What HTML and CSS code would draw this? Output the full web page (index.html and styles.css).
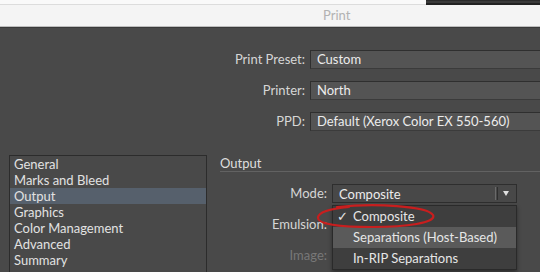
FILE: index.html
```html
<!DOCTYPE html>
<html>
<head>
<meta charset="utf-8">
<link rel="stylesheet" href="styles.css">
</head>
<body>
<div class="screen">
  <div class="topstrip">
    <div class="bgwin-left"></div>
    <div class="bgwin-right"></div>
  </div>
  <div class="titlebar"><span class="title">Print</span></div>
  <div class="content">
    <div class="presets">
      <div class="plabel">Print Preset:</div><div class="field">Custom</div>
      <div class="plabel">Printer:</div><div class="field">North</div>
      <div class="plabel">PPD:</div><div class="field">Default (Xerox Color EX 550-560)</div>
    </div>
    <div class="lower">
      <ul class="sidebar">
        <li>General</li>
        <li>Marks and Bleed</li>
        <li class="selected">Output</li>
        <li>Graphics</li>
        <li>Color Management</li>
        <li>Advanced</li>
        <li>Summary</li>
      </ul>
      <div class="panel">
        <div class="section-title">Output</div>
        <div class="form">
          <div class="flabel">Mode:</div>
          <div class="dropwrap">
            <div class="dropdown">
              <span class="dd-text">Composite</span>
              <span class="dd-sep"></span>
              <span class="dd-arrow"></span>
            </div>
            <div class="menu">
              <div class="mitem"><span class="check">✓</span>Composite</div>
              <div class="mitem hover">Separations (Host-Based)</div>
              <div class="mitem">In-RIP Separations</div>
            </div>
            <svg class="annot" width="124" height="26" viewBox="0 0 124 26">
              <path d="M22 3 C 60 -1, 112 2, 118 11 C 122 19, 90 23, 58 23 C 24 23, 3 20, 3 14 C 3 8, 14 5, 34 3" fill="none" stroke="#c81e1e" stroke-width="2.2" stroke-linecap="round"/>
            </svg>
          </div>
          <div class="flabel">Emulsion:</div>
          <div class="empty"></div>
          <div class="flabel disabled">Image:</div>
          <div class="empty"></div>
        </div>
      </div>
    </div>
  </div>
</div>
</body>
</html>
```
FILE: styles.css
```css
* { box-sizing: border-box; }
html, body { margin: 0; padding: 0; }
body {
  width: 540px;
  height: 272px;
  overflow: hidden;
  font-family: "Lato", "Open Sans", sans-serif;
  font-size: 13px;
  background: #494949;
}
.screen {
  width: 540px;
  height: 272px;
  display: flex;
  flex-direction: column;
  overflow: hidden;
}
.topstrip {
  height: 5px;
  display: flex;
  flex: none;
}
.bgwin-left {
  flex: 1;
  background: #f9f9f9;
  border-bottom: 1px solid #dcdcdc;
}
.bgwin-right {
  width: 114px;
  background: #3a3a3a;
  border-top: 1px solid #2a2a2a;
  border-bottom: 2px solid #222;
}
.titlebar {
  height: 22px;
  flex: none;
  background: #f4f4f4;
  border-bottom: 1px solid #bdbdbd;
  padding-left: 323px;
  line-height: 21px;
}
.title {
  color: #b2b2b2;
  font-size: 13px;
}
.content {
  flex: 1;
  background: #494949;
  border-top: 1px solid #3a3a3a;
  padding-top: 22px;
  display: flex;
  flex-direction: column;
}
.presets {
  display: grid;
  grid-template-columns: 310px 240px;
  row-gap: 12px;
}
.plabel {
  text-align: right;
  padding-right: 5px;
  color: #d6d6d6;
  line-height: 19px;
}
.field {
  height: 19px;
  background: #545454;
  border: 1px solid #2f2f2f;
  border-bottom-color: #3b3b3b;
  color: #ececec;
  padding-left: 6px;
  line-height: 17px;
  white-space: nowrap;
}
.lower {
  display: flex;
  margin-top: 24px;
  align-items: flex-start;
}
.sidebar {
  list-style: none;
  margin: 0 0 0 9px;
  padding: 0;
  width: 198px;
  height: 140px;
  border: 1px solid #2c2c2c;
  flex: none;
}
.sidebar li {
  height: 16px;
  line-height: 16px;
  padding-left: 4px;
  color: #e2e2e2;
}
.sidebar li.selected {
  background: #56606c;
}
.panel {
  margin-left: 13px;
  flex: 1;
  padding-top: 1px;
}
.section-title {
  color: #dedede;
  line-height: 15px;
  height: 16px;
  border-bottom: 1px solid #626262;
}
.form {
  margin-top: 12px;
  display: grid;
  grid-template-columns: 112px 185px;
  grid-auto-rows: 19px;
  row-gap: 12px;
}
.flabel {
  text-align: right;
  padding-right: 5px;
  color: #d6d6d6;
  line-height: 19px;
}
.flabel.disabled { color: #787878; }
.dropwrap { position: relative; }
.dropdown {
  height: 19px;
  background: #484848;
  border: 1px solid #2e2e2e;
  display: flex;
  align-items: center;
  color: #ececec;
}
.dd-text { flex: 1; padding-left: 6px; }
.dd-sep {
  width: 3px;
  height: 13px;
  border-left: 1px solid #6a6a6a;
  border-right: 1px solid #2e2e2e;
}
.dd-arrow {
  width: 0; height: 0;
  margin: 0 7px 0 5px;
  border-left: 3.5px solid transparent;
  border-right: 3.5px solid transparent;
  border-top: 5px solid #e0e0e0;
}
.menu {
  position: absolute;
  top: 21px;
  left: 0;
  width: 185px;
  background: #3e3e3e;
  border: 1px solid #2a2a2a;
  box-shadow: 0 2px 4px rgba(0,0,0,0.4);
  z-index: 2;
}
.mitem {
  height: 21px;
  line-height: 21px;
  padding-left: 20px;
  color: #e6e6e6;
  position: relative;
}
.mitem.hover { background: #5a5a5a; }
.check {
  position: absolute;
  left: 4px;
  font-size: 13px;
  font-family: "DejaVu Sans", sans-serif;
}
.annot {
  position: absolute;
  left: -17px;
  top: 20px;
  z-index: 3;
}
```
